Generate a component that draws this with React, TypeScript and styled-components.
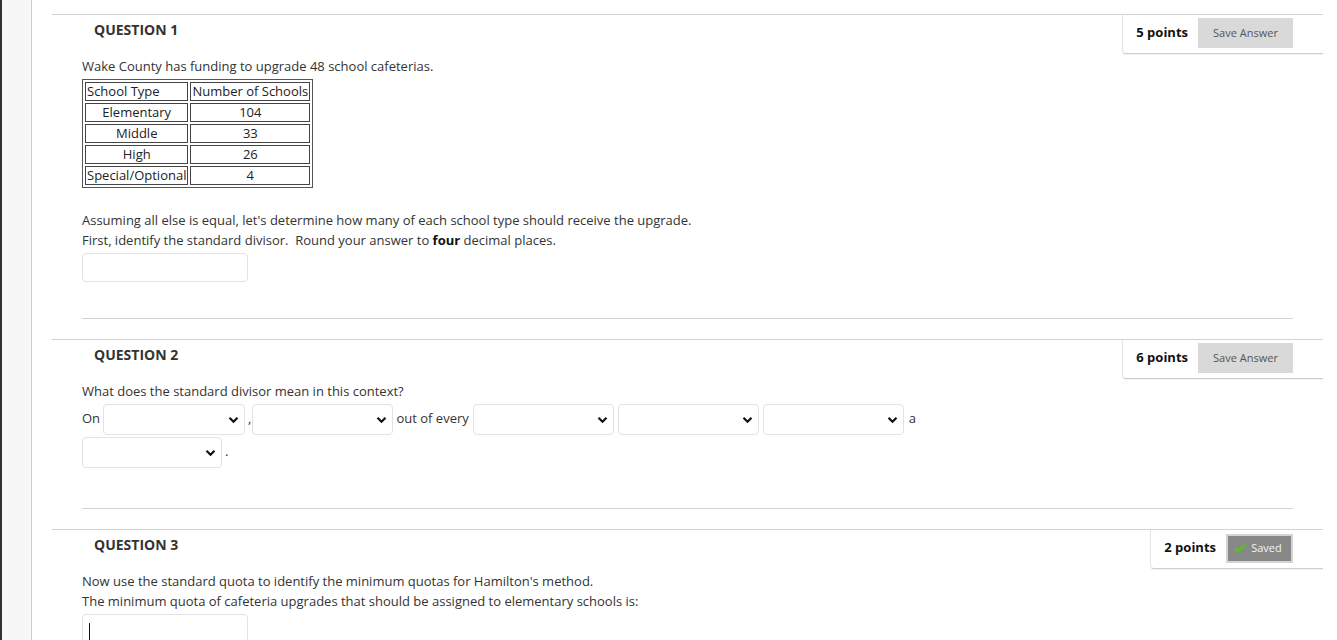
import React from 'react';
import styled, { createGlobalStyle } from 'styled-components';

const GlobalStyle = createGlobalStyle`
  body {
    margin: 0;
    font-family: "Open Sans", "Liberation Sans", Arial, sans-serif;
    font-size: 13px;
    color: #333;
    background: #fff;
  }
`;

const Page = styled.div`
  display: flex;
  min-height: 640px;
  overflow: hidden;
`;

const Sidebar = styled.div`
  width: 29px;
  flex-shrink: 0;
  background: #f7f7f7;
  border-left: 2px solid #333;
  border-right: 1px solid #ccc;
`;

const Main = styled.div`
  flex: 1;
  padding: 14px 14px 0 20px;
`;

const Question = styled.div`
  border-top: 1px solid #d3d3d3;
  margin-bottom: 20px;
`;

const Header = styled.div`
  display: flex;
  justify-content: space-between;
  align-items: flex-start;
  height: 40px;
`;

const Title = styled.h3`
  margin: 0;
  padding: 5px 0 0 42px;
  font-size: 14px;
  line-height: 20px;
  font-weight: 700;
  color: #333;
`;

const PointsBox = styled.div<{ $saved?: boolean }>`
  display: flex;
  align-items: flex-start;
  height: 39px;
  box-sizing: border-box;
  padding: ${(p) => (p.$saved ? '4px' : '3px')} 30px 0 13px;
  gap: 10px;
  border-left: 1px solid #e4e4e4;
  border-bottom: 1px solid #cfcfcf;
  border-bottom-left-radius: 4px;
  box-shadow: 0 1px 1px rgba(0, 0, 0, 0.06);
`;

const Points = styled.span<{ $saved?: boolean }>`
  font-weight: 700;
  color: #111;
  font-size: 13px;
  line-height: ${(p) => (p.$saved ? '27px' : '28px')};
`;

const SaveButton = styled.div<{ $saved?: boolean }>`
  display: flex;
  align-items: center;
  justify-content: center;
  gap: 5px;
  box-sizing: border-box;
  height: ${(p) => (p.$saved ? '29px' : '30px')};
  width: ${(p) => (p.$saved ? '67px' : '95px')};
  padding: 0 ${(p) => (p.$saved ? '3px' : '0')} 2px 0;
  font-size: 11px;
  color: ${(p) => (p.$saved ? '#f2f2f2' : '#555')};
  background: ${(p) => (p.$saved ? '#888' : '#d9d9d9')};
  border: ${(p) => (p.$saved ? '2px solid #d4d4d4' : 'none')};
`;

const Body = styled.div<{ $bottom: number }>`
  margin: 0 30px;
  padding-bottom: ${(p) => p.$bottom}px;
  border-bottom: 1px solid #d3d3d3;
`;

const Text = styled.p<{ $top?: number }>`
  margin: ${(p) => p.$top ?? 1}px 0 0;
  line-height: 20px;
  color: #333;
`;

const DataTable = styled.table`
  margin-top: 3px;
  border: 1px solid #555;
  border-spacing: 2px;
  color: #222;
`;

const Cell = styled.td<{ $w: number; $left?: boolean }>`
  width: ${(p) => p.$w}px;
  box-sizing: border-box;
  border: 1px solid #444;
  padding: 0 1px;
  line-height: 17px;
  text-align: ${(p) => (p.$left ? 'left' : 'center')};
  white-space: nowrap;
`;

const TextInput = styled.div<{ $top: number; $caret?: boolean }>`
  position: relative;
  margin-top: ${(p) => p.$top}px;
  width: 166px;
  height: 29px;
  box-sizing: border-box;
  border: 1px solid #e2e2e2;
  border-radius: 4px;
  background: #fff;
  &::after {
    content: '';
    display: ${(p) => (p.$caret ? 'block' : 'none')};
    position: absolute;
    left: 6px;
    top: 8px;
    width: 1px;
    height: 17px;
    background: #111;
  }
`;

const Row = styled.div<{ $top: number }>`
  display: flex;
  align-items: center;
  gap: 3px;
  margin-top: ${(p) => p.$top}px;
  color: #333;
`;

const Word = styled.span<{ $mr?: number; $ml?: number }>`
  padding-bottom: 4px;
  margin-right: ${(p) => p.$mr ?? 0}px;
  margin-left: ${(p) => p.$ml ?? 0}px;
`;

const SelectBox = styled.div<{ $w: number }>`
  display: flex;
  align-items: center;
  justify-content: flex-end;
  width: ${(p) => p.$w}px;
  height: 31px;
  box-sizing: border-box;
  padding-right: 5px;
  border: 1px solid #e2e2e2;
  border-radius: 4px;
  background: #fff;

  & + & {
    margin-left: 1px;
  }
`;

const Chevron = () => (
  <svg width="11" height="8" viewBox="0 0 11 8">
    <path d="M1.5 1.8 L5.5 5.8 L9.5 1.8" fill="none" stroke="#111" strokeWidth="2.2" />
  </svg>
);

const Check = () => (
  <svg width="12" height="10" viewBox="0 0 12 10">
    <path d="M1 5.2 L4.4 8.6 L11 1.4" fill="none" stroke="#5cbf2a" strokeWidth="2.4" />
  </svg>
);

const Select = ({ w }: { w: number }) => (
  <SelectBox $w={w}>
    <Chevron />
  </SelectBox>
);

const rows: [string, string][] = [
  ['Elementary', '104'],
  ['Middle', '33'],
  ['High', '26'],
  ['Special/Optional', '4'],
];

export default function App() {
  return (
    <>
      <GlobalStyle />
      <Page>
        <Sidebar />
        <Main>
          <Question>
            <Header>
              <Title>QUESTION 1</Title>
              <PointsBox>
                <Points>5 points</Points>
                <SaveButton>Save Answer</SaveButton>
              </PointsBox>
            </Header>
            <Body $bottom={36}>
              <Text>Wake County has funding to upgrade 48 school cafeterias.</Text>
              <DataTable>
                <tbody>
                  <tr>
                    <Cell $w={103} $left>
                      School Type
                    </Cell>
                    <Cell $w={119}>Number of Schools</Cell>
                  </tr>
                  {rows.map(([type, n]) => (
                    <tr key={type}>
                      <Cell $w={103}>{type}</Cell>
                      <Cell $w={119}>{n}</Cell>
                    </tr>
                  ))}
                </tbody>
              </DataTable>
              <Text $top={22}>
                Assuming all else is equal, let's determine how many of each school type should receive the upgrade.
                <br />
                First, identify the standard divisor.&nbsp; Round your answer to <b style={{ color: '#111' }}>four</b>{' '}
                decimal places.
              </Text>
              <TextInput $top={3} />
            </Body>
          </Question>

          <Question>
            <Header>
              <Title>QUESTION 2</Title>
              <PointsBox>
                <Points>6 points</Points>
                <SaveButton>Save Answer</SaveButton>
              </PointsBox>
            </Header>
            <Body $bottom={40}>
              <Text>What does the standard divisor mean in this context?</Text>
              <Row $top={3}>
                <Word>On</Word>
                <Select w={142} />
                <Word $mr={-2}>,</Word>
                <Select w={141} />
                <Word $mr={1}>out of every</Word>
                <Select w={141} />
                <Select w={141} />
                <Select w={141} />
                <Word $ml={2}>a</Word>
              </Row>
              <Row $top={2}>
                <Select w={140} />
                <Word>.</Word>
              </Row>
            </Body>
          </Question>

          <Question>
            <Header>
              <Title>QUESTION 3</Title>
              <PointsBox $saved>
                <Points $saved>2 points</Points>
                <SaveButton $saved>
                  <Check />
                  Saved
                </SaveButton>
              </PointsBox>
            </Header>
            <Body $bottom={40}>
              <Text>
                Now use the standard quota to identify the minimum quotas for Hamilton's method.
                <br />
                The minimum quota of cafeteria upgrades that should be assigned to elementary schools is:
              </Text>
              <TextInput $top={3} $caret />
            </Body>
          </Question>
        </Main>
      </Page>
    </>
  );
}
